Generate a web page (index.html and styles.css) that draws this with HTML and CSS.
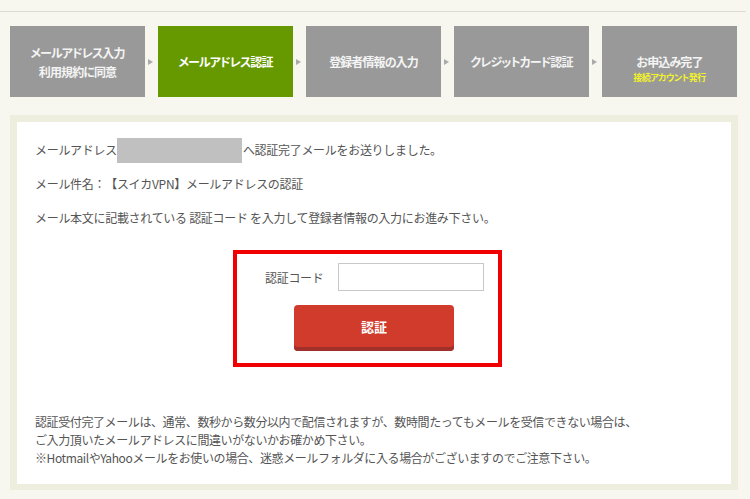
FILE: index.html
```html
<!DOCTYPE html>
<html lang="ja">
<head>
<meta charset="utf-8">
<title>メールアドレス認証</title>
<link rel="stylesheet" href="styles.css">
</head>
<body>
<div class="topline"></div>
<div class="wrap">
  <ol class="steps">
    <li class="step"><span>メールアドレス入力<br>利用規約に同意</span></li>
    <li class="arrow"></li>
    <li class="step active"><span>メールアドレス認証</span></li>
    <li class="arrow"></li>
    <li class="step"><span>登録者情報の入力</span></li>
    <li class="arrow"></li>
    <li class="step"><span>クレジットカード認証</span></li>
    <li class="arrow"></li>
    <li class="step last"><span>お申込み完了</span><small>接続アカウント発行</small></li>
  </ol>

  <div class="panel">
    <div class="inner">
      <p class="line first">メールアドレス<span class="masked"></span>へ認証完了メールをお送りしました。</p>
      <p class="line">メール件名：【スイカVPN】メールアドレスの認証</p>
      <p class="line">メール本文に記載されている 認証コード を入力して登録者情報の入力にお進み下さい。</p>

      <form class="auth">
        <div class="row">
          <label class="label" for="code">認証コード</label>
          <input id="code" class="code" type="text">
        </div>
        <button class="btn" type="button">認証</button>
      </form>

      <p class="note">認証受付完了メールは、通常、数秒から数分以内で配信されますが、数時間たってもメールを受信できない場合は、<br>ご入力頂いたメールアドレスに間違いがないかお確かめ下さい。<br>※HotmailやYahooメールをお使いの場合、迷惑メールフォルダに入る場合がございますのでご注意下さい。</p>
    </div>
  </div>
</div>
</body>
</html>
```

FILE: styles.css
```css
html, body {
  margin: 0;
  padding: 0;
}
body {
  background: #f7f7f0;
  font-family: "Noto Sans CJK JP", "Noto Sans", sans-serif;
  font-size: 12px;
  color: #555;
  width: 750px;
  height: 499px;
  overflow: hidden;
  text-spacing-trim: space-all;
}
.topline {
  margin-top: 11px;
  width: 746px;
  height: 1px;
  background: #dedbd2;
}
.wrap {
  padding: 0 0 0 10px;
  width: 729px;
}
.steps {
  list-style: none;
  margin: 14px 0 0;
  padding: 0;
  display: flex;
  height: 71px;
}
.step {
  width: 135px;
  flex: none;
  background: #999;
  color: #f4f4f4;
  font-weight: bold;
  font-size: 12px;
  line-height: 19px;
  text-align: center;
  display: flex;
  flex-direction: column;
  justify-content: center;
  align-items: center;
  font-feature-settings: "palt";
  letter-spacing: -0.9px;
}
.step.active {
  background: #669900;
  color: #fff;
}
.step.last {
  justify-content: flex-start;
  padding-top: 26px;
  box-sizing: border-box;
}
.step small {
  display: block;
  margin-top: 1px;
  font-size: 9px;
  line-height: 12px;
  color: #f2f22a;
  letter-spacing: -0.5px;
}
.arrow {
  width: 13px;
  flex: none;
  display: flex;
  align-items: center;
  justify-content: center;
  padding-top: 1px;
  box-sizing: border-box;
}
.arrow::before {
  content: "";
  display: block;
  margin-left: -2px;
  border-left: 5px solid #aaa;
  border-top: 3.5px solid transparent;
  border-bottom: 3.5px solid transparent;
}
.panel {
  margin-top: 18px;
  width: 728px;
  background: #eeeedf;
  padding: 7px 7px 6px 7px;
  box-sizing: border-box;
}
.inner {
  background: #fff;
  padding: 19px 18px 17px;
  height: 362px;
  box-sizing: border-box;
}
.line {
  margin: 0;
  line-height: 18px;
  height: 18px;
  letter-spacing: -0.3px;
  white-space: nowrap;
}
.line + .line {
  margin-top: 16px;
}
.line.first {
  display: flex;
  align-items: center;
}
.masked {
  display: inline-block;
  flex: none;
  width: 125px;
  height: 25px;
  background: #c0c0c0;
  margin-right: 1px;
}
.auth {
  margin: 23px 0 0 198px;
  width: 269px;
  height: 117px;
  border: 4px solid #f00000;
  box-sizing: border-box;
  padding: 9px 0 0 28px;
}
.row {
  display: flex;
  align-items: center;
  height: 28px;
}
.label {
  width: 73px;
  flex: none;
  color: #555;
  letter-spacing: -0.3px;
}
.code {
  width: 146px;
  height: 28px;
  box-sizing: border-box;
  border: 1px solid #c8c8c8;
  margin: 0;
  padding: 2px 6px;
  font: inherit;
  background: #fff;
}
.btn {
  display: block;
  margin: 14px 0 0 29px;
  width: 160px;
  height: 46px;
  border: none;
  border-radius: 4px;
  background: #d03b2c;
  box-shadow: inset 0 -4px 0 #a2302a;
  color: #fff;
  font: inherit;
  font-weight: bold;
  font-size: 13px;
  padding: 0 0 4px;
  cursor: pointer;
}
.note {
  margin: 46px 0 0;
  line-height: 18px;
  letter-spacing: -0.4px;
  white-space: nowrap;
}
```
